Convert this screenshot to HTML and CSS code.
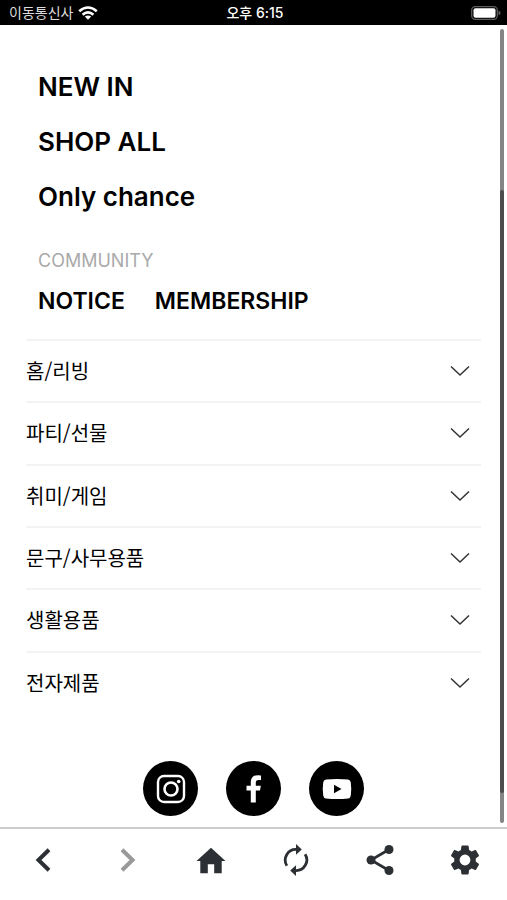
FILE: index.html
```html
<!DOCTYPE html>
<html lang="ko">
<head>
<meta charset="utf-8">
<meta name="viewport" content="width=device-width, initial-scale=1">
<title>Menu</title>
<link rel="stylesheet" href="styles.css">
</head>
<body>
<header class="status">
  <div class="carrier">
    <span>이동통신사</span>
    <svg width="20" height="14" viewBox="0 0 20 14" fill="none" stroke="#fff" stroke-width="2.6" aria-hidden="true"><path d="M1.2 5.2Q10-2.2 18.8 5.2M4.6 8.7Q10 4.2 15.4 8.7"/><path d="M10 13.8 6.8 10.6Q10 8.2 13.2 10.6Z" fill="#fff" stroke="none"/></svg>
  </div>
  <div class="clock">오후 6:15</div>
  <svg class="battery" width="30" height="14" viewBox="0 0 30 14" aria-hidden="true"><rect x=".7" y=".7" width="25.6" height="12.6" rx="3.5" fill="none" stroke="#5c5c5c" stroke-width="1.3"/><rect x="2.5" y="2.3" width="22" height="9.4" rx="2" fill="#fff"/><path d="M27.5 4.7Q29.6 5.3 29.6 7T27.5 9.3Z" fill="#5c5c5c"/></svg>
</header>
<main class="page">
  <nav class="primary">
    <a href="#new">NEW IN</a>
    <a href="#all">SHOP ALL</a>
    <a href="#chance">Only chance</a>
  </nav>
  <section class="community">
    <h2>COMMUNITY</h2>
    <div class="links"><a href="#notice">NOTICE</a><a href="#membership">MEMBERSHIP</a></div>
  </section>
  <div class="categories">
    <button type="button">홈/리빙<svg width="20" height="12" viewBox="0 0 20 12"><path d="M1 1.5 10 10 19 1.5"/></svg></button>
    <button type="button">파티/선물<svg width="20" height="12" viewBox="0 0 20 12"><path d="M1 1.5 10 10 19 1.5"/></svg></button>
    <button type="button">취미/게임<svg width="20" height="12" viewBox="0 0 20 12"><path d="M1 1.5 10 10 19 1.5"/></svg></button>
    <button type="button">문구/사무용품<svg width="20" height="12" viewBox="0 0 20 12"><path d="M1 1.5 10 10 19 1.5"/></svg></button>
    <button type="button">생활용품<svg width="20" height="12" viewBox="0 0 20 12"><path d="M1 1.5 10 10 19 1.5"/></svg></button>
    <button type="button">전자제품<svg width="20" height="12" viewBox="0 0 20 12"><path d="M1 1.5 10 10 19 1.5"/></svg></button>
  </div>
  <div class="social">
    <a href="#instagram" aria-label="Instagram"><svg width="30" height="30" viewBox="0 0 30 30" fill="none" stroke="#fff"><rect x="2" y="2" width="26" height="26" rx="6" stroke-width="2.4"/><circle cx="15" cy="15" r="6.5" stroke-width="2.6"/><circle cx="22.7" cy="7.5" r="1.8" fill="#fff" stroke="none"/></svg></a>
    <a href="#facebook" aria-label="Facebook"><svg width="30" height="30" viewBox="0 0 30 30" fill="#fff"><path d="M11.8 28.5V16.5H7.5V11.7H11.8V8.5C11.8 3.8 14.5 1.2 18.7 1.2 20.4 1.2 22 1.5 22 1.5V6H19.7C17.4 6 16.8 7.2 16.8 8.7V11.7H21.8L21 16.5H16.8V28.5Z"/></svg></a>
    <a href="#youtube" aria-label="YouTube"><svg width="30" height="30" viewBox="0 0 30 30"><path d="M4 5.5Q15 4.5 26 5.5 28.5 5.9 28.8 8.5 29.7 15 28.8 21.5 28.5 24.1 26 24.5 15 25.5 4 24.5 1.5 24.1 1.2 21.5.3 15 1.2 8.5 1.5 5.9 4 5.5Z" fill="#fff"/><path d="M12 10.8 19.5 15 12 19.2Z"/></svg></a>
  </div>
  <div class="scroll"><div class="thumb"></div></div>
</main>
<nav class="toolbar">
  <button type="button" aria-label="Back"><svg width="32" height="32" viewBox="0 0 32 32" fill="none" stroke="#2c2f34" stroke-width="4"><path d="M23 5.8 12.5 16 23 26.2"/></svg></button>
  <button type="button" aria-label="Forward"><svg width="32" height="32" viewBox="0 0 32 32" fill="none" stroke="#999" stroke-width="4"><path d="M11 5.8 21.5 16 11 26.2"/></svg></button>
  <button type="button" aria-label="Home"><svg width="32" height="32" viewBox="0 0 32 32" fill="#2c2f34"><path d="M16 3.8 30.5 17H26.7V29.2H19.2V20.2H12.8V29.2H5.3V17H1.5Z"/></svg></button>
  <button type="button" aria-label="Reload"><svg width="32" height="32" viewBox="0 0 32 32" fill="none" stroke="#2c2f34" stroke-width="2.8"><path d="M6.9 21.8A10.7 10.7 0 0 1 16.5 5.4M25.1 10.2A10.7 10.7 0 0 1 15.5 26.6"/><path d="M16 0V10.8L21.8 5.4ZM16 21.2V32L10.2 26.6Z" fill="#2c2f34" stroke="none"/></svg></button>
  <button type="button" aria-label="Share"><svg width="32" height="32" viewBox="0 0 32 32" fill="#2c2f34"><path d="M25 5.5 7 16 25 26.5" fill="none" stroke="#2c2f34" stroke-width="2.7"/><circle cx="25" cy="5.5" r="4.5"/><circle cx="7" cy="16" r="4.5"/><circle cx="25" cy="26.5" r="4.5"/></svg></button>
  <button type="button" aria-label="Settings"><svg width="36" height="36" viewBox="0 0 24 24" fill="#2c2f34"><path d="M19.14 12.94c.04-.3.06-.61.06-.94 0-.32-.02-.64-.07-.94l2.03-1.58c.18-.14.23-.41.12-.61l-1.92-3.32c-.12-.22-.37-.29-.59-.22l-2.39.96c-.5-.38-1.03-.7-1.62-.94l-.36-2.54c-.04-.24-.24-.41-.48-.41h-3.84c-.24 0-.43.17-.47.41l-.36 2.54c-.59.24-1.13.57-1.62.94l-2.39-.96c-.22-.08-.47 0-.59.22L2.74 8.87c-.12.21-.08.47.12.61l2.03 1.58c-.05.3-.09.63-.09.94s.02.64.07.94l-2.03 1.58c-.18.14-.23.41-.12.61l1.92 3.32c.12.22.37.29.59.22l2.39-.96c.5.38 1.03.7 1.62.94l.36 2.54c.05.24.24.41.48.41h3.84c.24 0 .44-.17.47-.41l.36-2.54c.59-.24 1.13-.56 1.62-.94l2.39.96c.22.08.47 0 .59-.22l1.92-3.32c.12-.22.07-.47-.12-.61l-2.01-1.58zM12 15.6A3.6 3.6 0 1 1 12 8.4a3.6 3.6 0 0 1 0 7.2z"/></svg></button>
</nav>
</body>
</html>
```
FILE: styles.css
```css
* { box-sizing: border-box; }
body {
  margin: 0;
  min-height: 100vh;
  display: flex;
  flex-direction: column;
  background: #fff;
  color: #000;
  font-family: Inter, "Noto Sans CJK KR", sans-serif;
}
a { color: inherit; text-decoration: none; }
button { border: 0; padding: 0; background: none; color: inherit; font: inherit; }
svg { display: block; }

.status {
  height: 25px;
  padding: 0 6px 0 9px;
  display: grid;
  grid-template-columns: 1fr auto 1fr;
  align-items: center;
  background: #000;
  color: #fff;
  font-size: 14px;
  line-height: 20px;
}
.carrier { display: flex; align-items: center; gap: 5px; color: #ddd; }
.clock { font-weight: 500; }
.battery { justify-self: end; }

.page {
  position: relative;
  flex: 1;
  display: flex;
  flex-direction: column;
  padding: 42px 26px 11px;
}
.primary {
  display: flex;
  flex-direction: column;
  align-items: flex-start;
  gap: 15px;
  padding: 0 12px;
  font-size: 26px;
  font-weight: 600;
  line-height: 40px;
}
.community { padding: 0 12px; margin: 30px 0 23px; }
.community h2 {
  margin: 0;
  font-size: 18px;
  font-weight: 400;
  line-height: 28px;
  color: #aaa;
}
.links {
  display: flex;
  gap: 30px;
  margin-top: 11px;
  font-size: 23px;
  font-weight: 600;
  line-height: 30px;
}

.categories { flex: 1; display: flex; flex-direction: column; }
.categories button {
  flex: 1;
  min-height: 48px;
  display: flex;
  align-items: center;
  justify-content: space-between;
  padding: 0 11px 0 0;
  border-top: 2px solid #f3f3f3;
  font-family: "Noto Sans CJK KR", sans-serif;
  font-size: 20px;
  line-height: 28px;
}
.categories svg { fill: none; stroke: #333; stroke-width: 1.5; }

.social { display: flex; justify-content: center; gap: 28px; margin-top: 48px; }
.social a {
  width: 55px;
  height: 55px;
  display: grid;
  place-items: center;
  border-radius: 50%;
  background: #000;
}

.scroll {
  position: absolute;
  top: 4px;
  right: 3px;
  bottom: 4px;
  width: 4px;
  border-radius: 2px;
  background: #858585;
}
.thumb { position: absolute; top: 161px; bottom: 30px; width: 4px; border-radius: 2px; background: #4d4d4d; }

.toolbar {
  height: 73px;
  padding-bottom: 10px;
  display: grid;
  grid-template-columns: repeat(6, 1fr);
  border-top: 2px solid #ccc;
}
.toolbar button { display: grid; place-items: center; }
```
